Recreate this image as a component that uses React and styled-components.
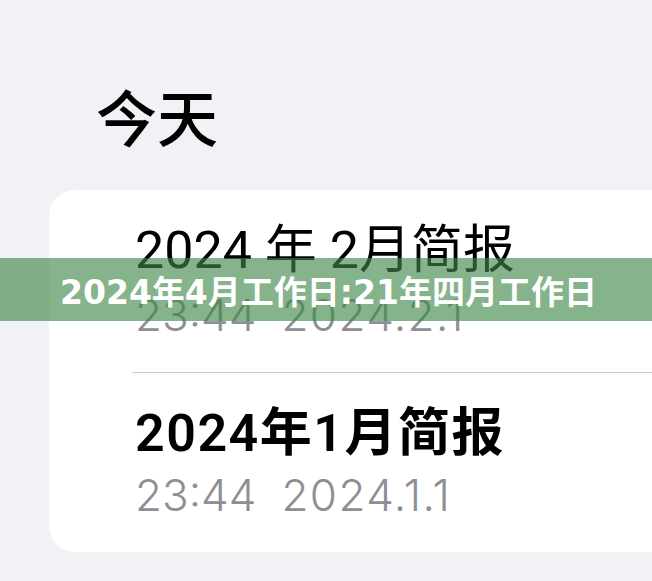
import React from 'react';
import styled, { createGlobalStyle } from 'styled-components';

const GlobalStyle = createGlobalStyle`
  html, body {
    margin: 0;
    padding: 0;
    background: #f1f1f6;
    overflow: hidden;
  }
  body {
    font-family: Inter, "Noto Sans CJK SC", sans-serif;
  }
`;

const Page = styled.div`
  position: relative;
  width: 652px;
  height: 581px;
  padding: 70px 0 0 49px;
  box-sizing: border-box;
  overflow: hidden;
`;

const Heading = styled.h1`
  margin: 0 0 28px 47px;
  font-family: "Noto Sans CJK SC", sans-serif;
  font-size: 61px;
  font-weight: 500;
  line-height: 92px;
  color: #000;
`;

const Card = styled.div`
  width: 700px;
  background: #fff;
  border-radius: 26px;
  overflow: hidden;
`;

const Row = styled.div`
  position: relative;
  padding: 31px 0 31px 86px;
  border-top: ${(p) => (p.$first ? 'none' : '1px solid transparent')};

  &::before {
    content: '';
    display: ${(p) => (p.$first ? 'none' : 'block')};
    position: absolute;
    top: -1px;
    left: 83px;
    right: 0;
    height: 1px;
    background: #c8c8cc;
  }
`;

const Title = styled.div`
  font-family: Roboto, "Noto Sans CJK SC", sans-serif;
  font-size: 52px;
  line-height: 60px;
  font-weight: ${(p) => (p.$bold ? 600 : 400)};
  letter-spacing: ${(p) => (p.$bold ? 1.5 : 0)}px;
  color: #000;
  white-space: pre;
`;

const Meta = styled.div`
  display: flex;
  gap: 25px;
  margin-top: ${(p) => p.$gap}px;
  font-family: Inter, sans-serif;
  font-size: 44px;
  line-height: 52px;
  font-weight: 300;
  color: #8e8e93;
`;

const Stamp = styled.span`
  letter-spacing: ${(p) => (p.$wide ? 1.4 : 0)}px;
`;

const Banner = styled.div`
  position: absolute;
  left: 0;
  right: 0;
  top: 258px;
  height: 63px;
  display: flex;
  align-items: center;
  padding-left: 60px;
  background: rgba(62, 135, 72, 0.63);
  color: #fff;
  font-family: "DejaVu Sans", "Noto Sans CJK SC", sans-serif;
  font-size: 33px;
  font-weight: 700;
  white-space: nowrap;
`;

const reports = [
  { title: '2024 年 2月简报', time: '23:44', date: '2024.2.1', bold: false, gap: 8 },
  { title: '2024年1月简报', time: '23:44', date: '2024.1.1', bold: true, gap: 5 },
];

export default function App() {
  return (
    <>
      <GlobalStyle />
      <Page>
        <Heading>今天</Heading>
        <Card>
          {reports.map((r, i) => (
            <Row key={r.date} $first={i === 0}>
              <Title $bold={r.bold}>{r.title}</Title>
              <Meta $gap={r.gap}>
                <Stamp>{r.time}</Stamp>
                <Stamp $wide>{r.date}</Stamp>
              </Meta>
            </Row>
          ))}
        </Card>
        <Banner>2024年4月工作日:21年四月工作日</Banner>
      </Page>
    </>
  );
}
